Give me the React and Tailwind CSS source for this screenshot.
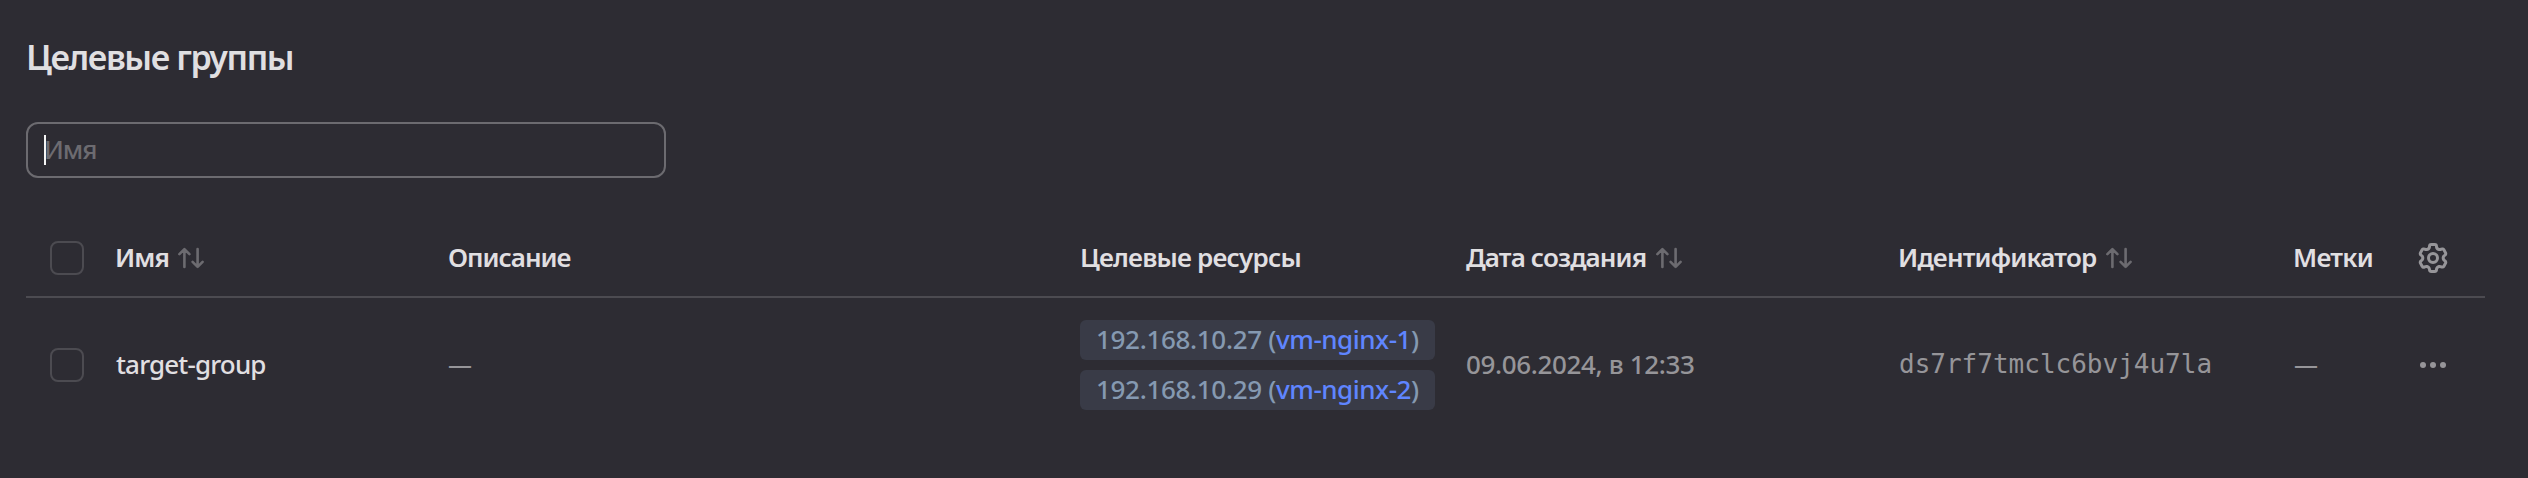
const GRID =
  "grid grid-cols-[65px_333px_632px_387px_431px_395px_126px_66px] items-center pl-6";

const GEAR =
  "M7.199 2H8.801C8.911 2 9 2.089 9 2.199C9 4.007 10.958 5.138 12.524 4.234C12.619 4.179 12.741 4.211 12.796 4.306L13.597 5.694C13.652 5.789 13.619 5.911 13.524 5.966C11.958 6.87 11.958 9.13 13.524 10.034C13.619 10.089 13.652 10.211 13.597 10.306L12.796 11.694C12.741 11.789 12.619 11.821 12.524 11.766C10.958 10.862 9 11.993 9 13.801C9 13.911 8.911 14 8.801 14H7.199C7.089 14 7 13.911 7 13.801C7 11.993 5.042 10.862 3.476 11.766C3.381 11.821 3.259 11.789 3.204 11.694L2.403 10.306C2.348 10.211 2.381 10.089 2.476 10.034C4.042 9.13 4.042 6.87 2.476 5.966C2.381 5.911 2.348 5.789 2.403 5.694L3.204 4.306C3.259 4.211 3.381 4.179 3.476 4.234C5.042 5.138 7 4.007 7 2.199C7 2.089 7.089 2 7.199 2Z";

function Checkbox() {
  return (
    <button
      type="button"
      role="checkbox"
      aria-checked="false"
      className="block size-[34px] rounded-lg border-2 border-[#4c4b51]"
    />
  );
}

function SortIcon() {
  return (
    <svg
      viewBox="0 0 26 22"
      className="h-[22px] w-[26px] shrink-0 text-[#6c6b70]"
      fill="none"
      stroke="currentColor"
      strokeWidth="2.6"
      strokeLinecap="round"
      strokeLinejoin="round"
    >
      <path d="M6.4 20V2.2M1.4 7.2L6.4 2.2L11.4 7.2" />
      <path d="M19.6 2V19.8M14.6 14.8L19.6 19.8L24.6 14.8" />
    </svg>
  );
}

function GearIcon() {
  return (
    <svg viewBox="0 0 16 16" className="-ml-0.5 size-8 text-[#969599]">
      <mask id="gear-body" maskUnits="userSpaceOnUse" x="0" y="0" width="16" height="16">
        <rect width="16" height="16" fill="white" />
        <path d={GEAR} fill="black" />
      </mask>
      <path
        d={GEAR}
        fill="none"
        stroke="currentColor"
        strokeWidth="3"
        strokeLinejoin="round"
        mask="url(#gear-body)"
      />
      <circle cx="8" cy="8" r="2.25" fill="none" stroke="currentColor" strokeWidth="1.5" />
    </svg>
  );
}

function DotsIcon() {
  return (
    <svg viewBox="0 0 32 32" className="-ml-0.5 size-8 text-[#969599]" fill="currentColor">
      <circle cx="6" cy="16" r="3" />
      <circle cx="16" cy="16" r="3" />
      <circle cx="26" cy="16" r="3" />
    </svg>
  );
}

function ResourceChip({ ip, vm }) {
  return (
    <div className="flex h-10 w-[355px] items-center rounded-md bg-[#393b47] pb-0.5 pl-4 whitespace-pre text-[#8599b1]">
      <span className="tracking-[-0.32px]">{ip} (</span>
      <a className="tracking-[-0.48px] text-[#5f85ff]">{vm}</a>
      <span>)</span>
    </div>
  );
}

export default function App() {
  return (
    <main className="h-[478px] bg-[#2d2c33] pt-[34px] pl-[26px] font-['Noto_Sans',sans-serif] text-[26px] leading-9 font-medium whitespace-nowrap text-[#e0dfe1]">
      <h1 className="text-[34px] leading-[46px] font-semibold tracking-[-1.4px]">
        Целевые группы
      </h1>

      <div className="relative mt-[42px] h-14 w-[640px]">
        <input
          placeholder="Имя"
          className="size-full rounded-xl border-2 border-[#6c6b70] bg-transparent pb-0.5 pl-4 tracking-[-1.1px] outline-none placeholder:text-[#6c6b70]"
        />
        <span className="absolute top-[13px] left-[18px] h-[30px] w-0.5 bg-[#f5f5f5]" />
      </div>

      <div className="mt-[42px] w-[2459px]">
        <div className={`${GRID} h-[78px] border-b-2 border-[#4c4b51] font-semibold`}>
          <Checkbox />
          <div className="flex items-center gap-[9px]">
            <span className="pb-0.5 tracking-[-0.9px]">Имя</span>
            <SortIcon />
          </div>
          <span className="pb-0.5 tracking-[-1px]">Описание</span>
          <span className="pb-0.5 tracking-[-0.8px]">Целевые ресурсы</span>
          <div className="-ml-px flex items-center gap-2.5">
            <span className="pb-0.5 tracking-[-0.88px]">Дата создания</span>
            <SortIcon />
          </div>
          <div className="flex items-center gap-2.5">
            <span className="pb-0.5 tracking-[-0.83px]">Идентификатор</span>
            <SortIcon />
          </div>
          <span className="pb-0.5 tracking-[-0.75px]">Метки</span>
          <GearIcon />
        </div>

        <div className={`${GRID} h-[134px] text-[#969599]`}>
          <Checkbox />
          <span className="pb-0.5 pl-px tracking-[-0.85px] text-[#e0dfe1]">target-group</span>
          <span className="pb-0.5 text-2xl">—</span>
          <div className="flex flex-col gap-2.5">
            <ResourceChip ip="192.168.10.27" vm="vm-nginx-1" />
            <ResourceChip ip="192.168.10.29" vm="vm-nginx-2" />
          </div>
          <span className="-ml-px pb-0.5 tracking-[-0.35px]">09.06.2024, в 12:33</span>
          <span className="pb-0.5 pl-px font-['DejaVu_Sans_Mono',monospace] font-normal">
            ds7rf7tmclc6bvj4u7la
          </span>
          <span className="pb-0.5 pl-px text-2xl">—</span>
          <DotsIcon />
        </div>
      </div>
    </main>
  );
}
